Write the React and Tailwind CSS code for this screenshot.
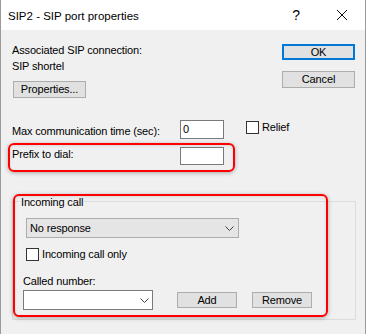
const Chevron = () => (
  <svg width="9" height="5" viewBox="0 0 9 5" className="block">
    <path d="M0.5 0.5 L4.5 4.5 L8.5 0.5" fill="none" stroke="#404040" strokeWidth="1" />
  </svg>
);

const CloseIcon = () => (
  <svg width="10" height="10" viewBox="0 0 10 10" className="block">
    <path d="M0 0 L10 10 M10 0 L0 10" fill="none" stroke="#111" strokeWidth="1" />
  </svg>
);

export default function App() {
  return (
    <div className="relative w-[367px] h-[334px] bg-white font-['Liberation_Sans',Arial,sans-serif] text-[11px] leading-[15px] tracking-[-0.15px] text-black">
      <div className="w-[366px] h-[334px] bg-[#f0f0f0] border-l border-r border-[#9a9a9a] flex flex-col">
        {/* title bar */}
        <div className="h-[30px] bg-white flex items-center shrink-0">
          <span className="ml-[7px] text-[11.5px] leading-[16px] pt-[1px] tracking-normal">SIP2 - SIP port properties</span>
          <div className="ml-auto w-[46px] h-[30px] flex items-center justify-center text-[14px] pt-[1px]">?</div>
          <div className="w-[46px] h-[30px] flex items-center justify-center">
            <CloseIcon />
          </div>
        </div>

        {/* body */}
        <div className="flex-1 flex flex-col">
          {/* top section */}
          <div className="flex items-start">
            <div className="pl-[11px] pt-[13px] flex flex-col items-start">
              <div>Associated SIP connection:</div>
              <div className="mt-[1px]">SIP shortel</div>
              <button className="mt-[7px] ml-[1px] w-[73px] h-[17px] bg-[#e1e1e1] border border-[#adadad] flex items-center justify-center">
                Properties...
              </button>
            </div>
            <div className="ml-auto pr-[10px] pt-[14px] flex flex-col">
              <button className="w-[73px] h-[16px] bg-[#e1e1e1] border-2 border-[#0078d7] flex items-center justify-center">
                OK
              </button>
              <button className="mt-[11px] w-[73px] h-[17px] bg-[#e1e1e1] border border-[#adadad] flex items-center justify-center">
                Cancel
              </button>
            </div>
          </div>

          {/* max communication row */}
          <div className="mt-[22px] flex items-start">
            <div className="w-[179px] pl-[11px] pt-[4px]">Max communication time (sec):</div>
            <div className="w-[44px] h-[19px] border border-[#7a7a7a] bg-white pl-[2px] pt-[1px]">0</div>
            <div className="ml-[22px] mt-[1px] flex items-start">
              <div className="w-[13px] h-[13px] border border-[#333] bg-white" />
              <span className="ml-[3px] -mt-[1px]">Relief</span>
            </div>
          </div>

          {/* prefix row */}
          <div className="mt-[8px] flex items-start">
            <div className="w-[179px] pl-[11px]">Prefix to dial:</div>
            <div className="w-[44px] h-[18px] border border-[#7a7a7a] bg-white" />
          </div>

          {/* group box */}
          <div className="relative mt-[36px] ml-[11px] w-[344px] h-[119px] border border-[#dcdcdc] pl-[10px] pt-[16px] flex flex-col items-start">
            <span className="absolute left-[7px] -top-[7px] px-[1px] bg-[#f0f0f0]">Incoming call</span>
            <div className="ml-[3px] w-[213px] h-[20px] border border-[#acacac] bg-[#e5e5e5] flex items-center pl-[3px] pr-[4px]">
              <span className="pt-[1px]">No response</span>
              <span className="ml-auto">
                <Chevron />
              </span>
            </div>
            <div className="ml-[3px] mt-[10px] flex items-start">
              <div className="w-[13px] h-[13px] border border-[#333] bg-white" />
              <span className="ml-[3px] -mt-[1px]">Incoming call only</span>
            </div>
            <div className="mt-[12px]">Called number:</div>
            <div className="mt-[1px] flex items-start">
              <div className="w-[130px] h-[20px] border border-[#7a7a7a] bg-white flex items-center justify-end pr-[3px]">
                <Chevron />
              </div>
              <button className="ml-[24px] mt-[2px] w-[60px] h-[16px] bg-[#e1e1e1] border border-[#adadad] flex items-center justify-center">
                Add
              </button>
              <button className="ml-[15px] mt-[2px] w-[60px] h-[16px] bg-[#e1e1e1] border border-[#adadad] flex items-center justify-center">
                Remove
              </button>
            </div>
          </div>
        </div>
      </div>

      {/* red annotation highlights */}
      <div className="absolute left-[8px] top-[143px] w-[227px] h-[29px] border-2 border-[#ff0000] rounded-[6px] shadow-[0_1px_4px_rgba(0,0,0,0.3),inset_0_1px_3px_rgba(0,0,0,0.1)] pointer-events-none" />
      <div className="absolute left-[13px] top-[194px] w-[315px] h-[123px] border-2 border-[#ff0000] rounded-[6px] shadow-[0_1px_4px_rgba(0,0,0,0.3),inset_0_1px_3px_rgba(0,0,0,0.1)] pointer-events-none" />
    </div>
  );
}
